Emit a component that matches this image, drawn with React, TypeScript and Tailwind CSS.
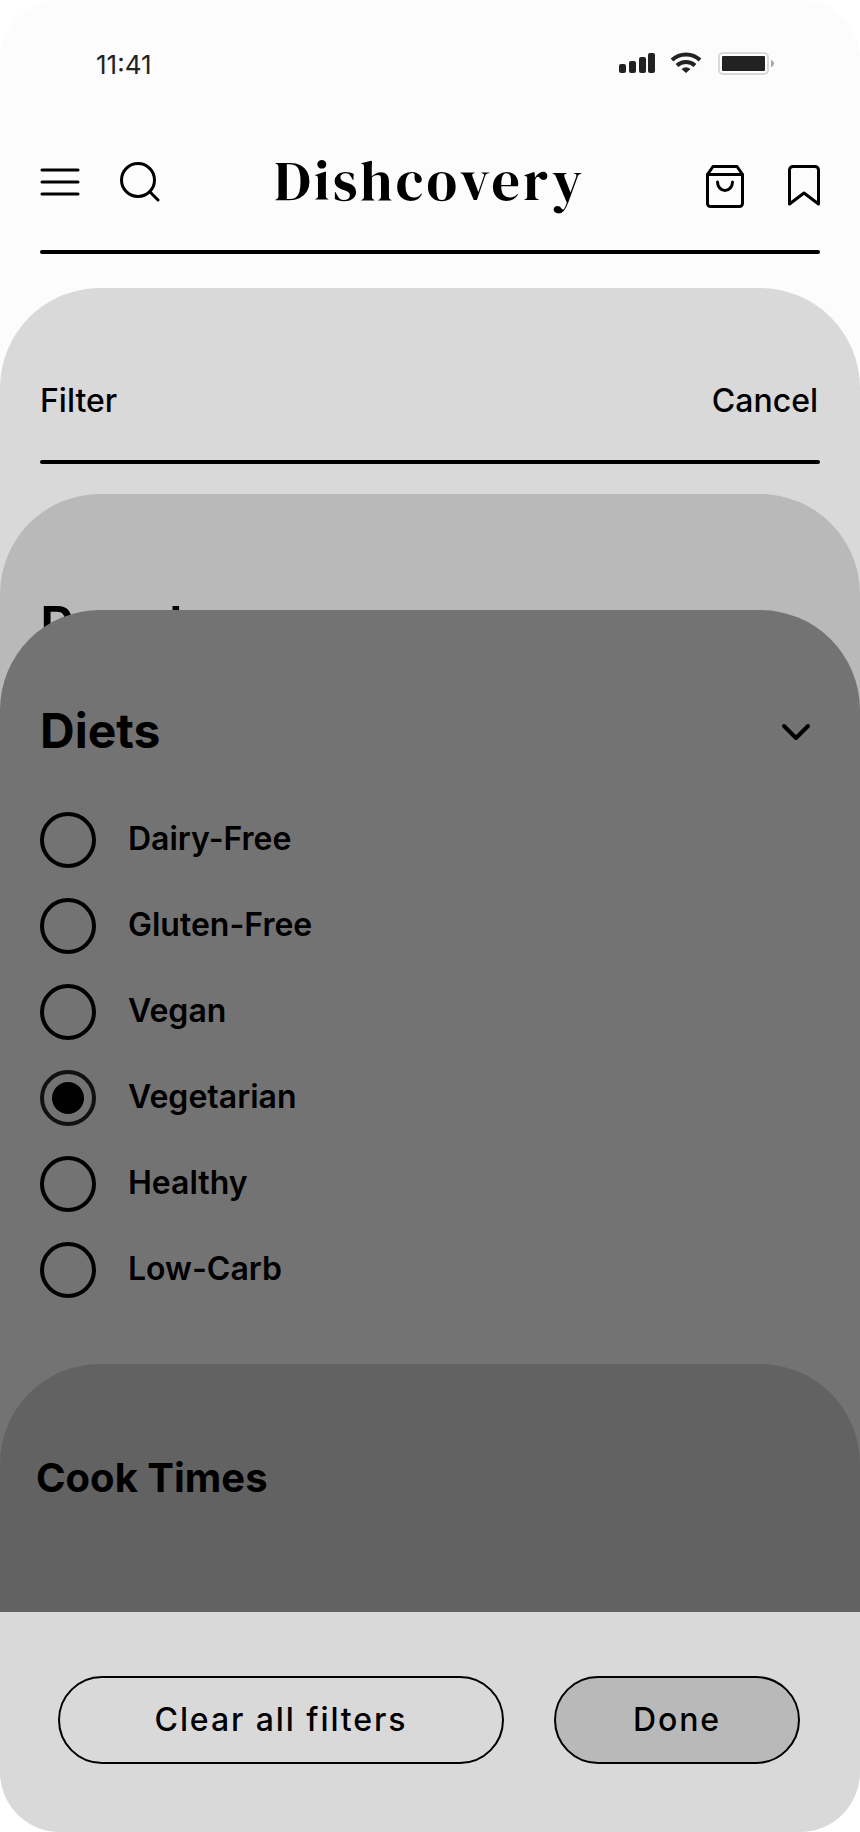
import React, { useState } from 'react';

const diets = ['Dairy-Free', 'Gluten-Free', 'Vegan', 'Vegetarian', 'Healthy', 'Low-Carb'];

const StatusBar = () => (
  <div className="flex items-center justify-between pt-[47px] pl-24 pr-[84px] text-[#222]">
    <span className="text-[26px] leading-9">11:41</span>
    <svg className="-mt-1" width="158" height="24" viewBox="0 0 158 24" fill="#222">
      <rect x="1" y="13" width="7" height="9" rx="2" />
      <rect x="11" y="10" width="7" height="12" rx="2" />
      <rect x="21" y="6" width="7" height="16" rx="2" />
      <rect x="30" y="2" width="7" height="20" rx="2" />
      <g fill="none" stroke="#222" strokeWidth="4">
        <path d="M54 9a20.500 20.500 0 0 1 28 0" />
        <path d="M59 14.500a13 13 0 0 1 18 0" />
      </g>
      <path d="M63.500 18a7.500 7.500 0 0 1 9 0L68 22z" />
      <rect x="101" y="2" width="49" height="21" rx="4" fill="#fff" stroke="#d9d9d9" strokeWidth="2" />
      <rect x="104" y="5" width="43" height="15" rx="1" />
      <path d="M153 9c4 1 4 6 0 7z" fill="#aaa" />
    </svg>
  </div>
);

const Header = () => (
  <header className="flex items-center justify-between px-10 pt-[63px]">
    <div className="flex flex-1 items-center gap-10">
      <button type="button" aria-label="Menu">
        <svg width="40" height="40" viewBox="0 0 40 40" fill="none" stroke="#000" strokeWidth="3" strokeLinecap="round">
          <path d="M2 8h36M2 20h36M2 32h36" />
        </svg>
      </button>
      <button type="button" aria-label="Search">
        <svg width="40" height="40" viewBox="0 0 40 40" fill="none" stroke="#000" strokeWidth="3" strokeLinecap="round">
          <circle cx="18" cy="18" r="16.500" />
          <path d="M30 30l8 8" />
        </svg>
      </button>
    </div>
    <h1 className="pb-0.5 font-['DM_Serif_Display','Liberation_Serif',serif] text-[56px] leading-[70px] font-normal tracking-[0.06em]">
      Dishcovery
    </h1>
    <div className="flex flex-1 items-center justify-end gap-11 pt-2">
      <button type="button" aria-label="Shopping bag">
        <svg width="38" height="44" viewBox="0 0 38 44" fill="none" stroke="#000" strokeWidth="3" strokeLinejoin="round" strokeLinecap="round">
          <path d="M1.500 10.500L7 2.500h24l5.500 8v29a3 3 0 0 1-3 3h-29a3 3 0 0 1-3-3z" />
          <path d="M1.500 10.500h35" />
          <path d="M11.500 18a7.500 8.500 0 0 0 15 0" />
        </svg>
      </button>
      <button type="button" aria-label="Saved recipes">
        <svg width="32" height="44" viewBox="0 0 32 44" fill="none" stroke="#000" strokeWidth="3" strokeLinejoin="round">
          <path d="M1.500 40V6a3.500 3.500 0 0 1 3.500-3.500h22a3.500 3.500 0 0 1 3.500 3.500v34L16 29z" />
        </svg>
      </button>
    </div>
  </header>
);

const Divider = () => <hr className="mx-10 h-1 rounded-full border-0 bg-black" />;

const App = () => {
  const [selected, setSelected] = useState('Vegetarian');

  return (
    <div className="min-h-screen w-full overflow-hidden rounded-[60px] bg-[#fcfcfc] font-['Inter',sans-serif] text-black">
      <StatusBar />
      <Header />
      <div className="pt-8">
        <Divider />
      </div>

      <main className="mt-[34px] rounded-t-[100px] bg-[#d9d9d9]">
        <div className="flex items-center justify-between px-10 pt-[93px] pb-[39px] text-[32px] leading-10 font-medium">
          <h2>Filter</h2>
          <button type="button" className="pr-0.5">Cancel</button>
        </div>
        <Divider />

        <section className="mt-[30px] rounded-t-[100px] bg-[#b9b9b9]">
          <h3 className="h-[116px] px-10 pt-[106px] text-[52px] leading-[52px] font-semibold">Popular</h3>

          <section className="relative rounded-t-[100px] bg-[#737373]">
            <div className="flex items-center justify-between px-10 pt-[92px]">
              <h3 className="text-[48px] leading-[58px] font-bold">Diets</h3>
              <button type="button" aria-label="Collapse diets" className="px-2">
                <svg width="32" height="32" viewBox="0 0 32 32" fill="none" stroke="#000" strokeWidth="4" strokeLinecap="round" strokeLinejoin="round">
                  <path d="M4 11l12 12 12-12" />
                </svg>
              </button>
            </div>

            <div role="radiogroup" aria-label="Diets" className="flex flex-col gap-[30px] px-10 pt-[52px] pb-[66px]">
              {diets.map((diet) => (
                <label key={diet} className="flex items-center gap-8 text-[32px] leading-10 font-semibold">
                  <input
                    type="radio"
                    name="diet"
                    value={diet}
                    checked={selected === diet}
                    onChange={() => setSelected(diet)}
                    className="grid size-14 appearance-none place-items-center rounded-full border-4 border-black before:size-8 before:rounded-full checked:border-[#111] checked:before:bg-black"
                  />
                  <span className="pb-0.5">{diet}</span>
                </label>
              ))}
            </div>

            <section className="rounded-t-[100px] bg-[#626262] px-9 pt-[90px] pb-[110px]">
              <h3 className="text-[40px] leading-[48px] font-bold">Cook Times</h3>
            </section>
          </section>
        </section>

        <footer className="flex gap-[50px] pt-16 pr-[60px] pb-[68px] pl-[58px] text-[32px] leading-10 font-medium tracking-[0.06em]">
          <button type="button" className="h-[88px] grow-[442] basis-0 rounded-full border-2 border-black">
            Clear all filters
          </button>
          <button type="button" className="h-[88px] grow-[242] basis-0 rounded-full border-2 border-black bg-[#b9b9b9]">
            Done
          </button>
        </footer>
      </main>
    </div>
  );
};

export default App;
